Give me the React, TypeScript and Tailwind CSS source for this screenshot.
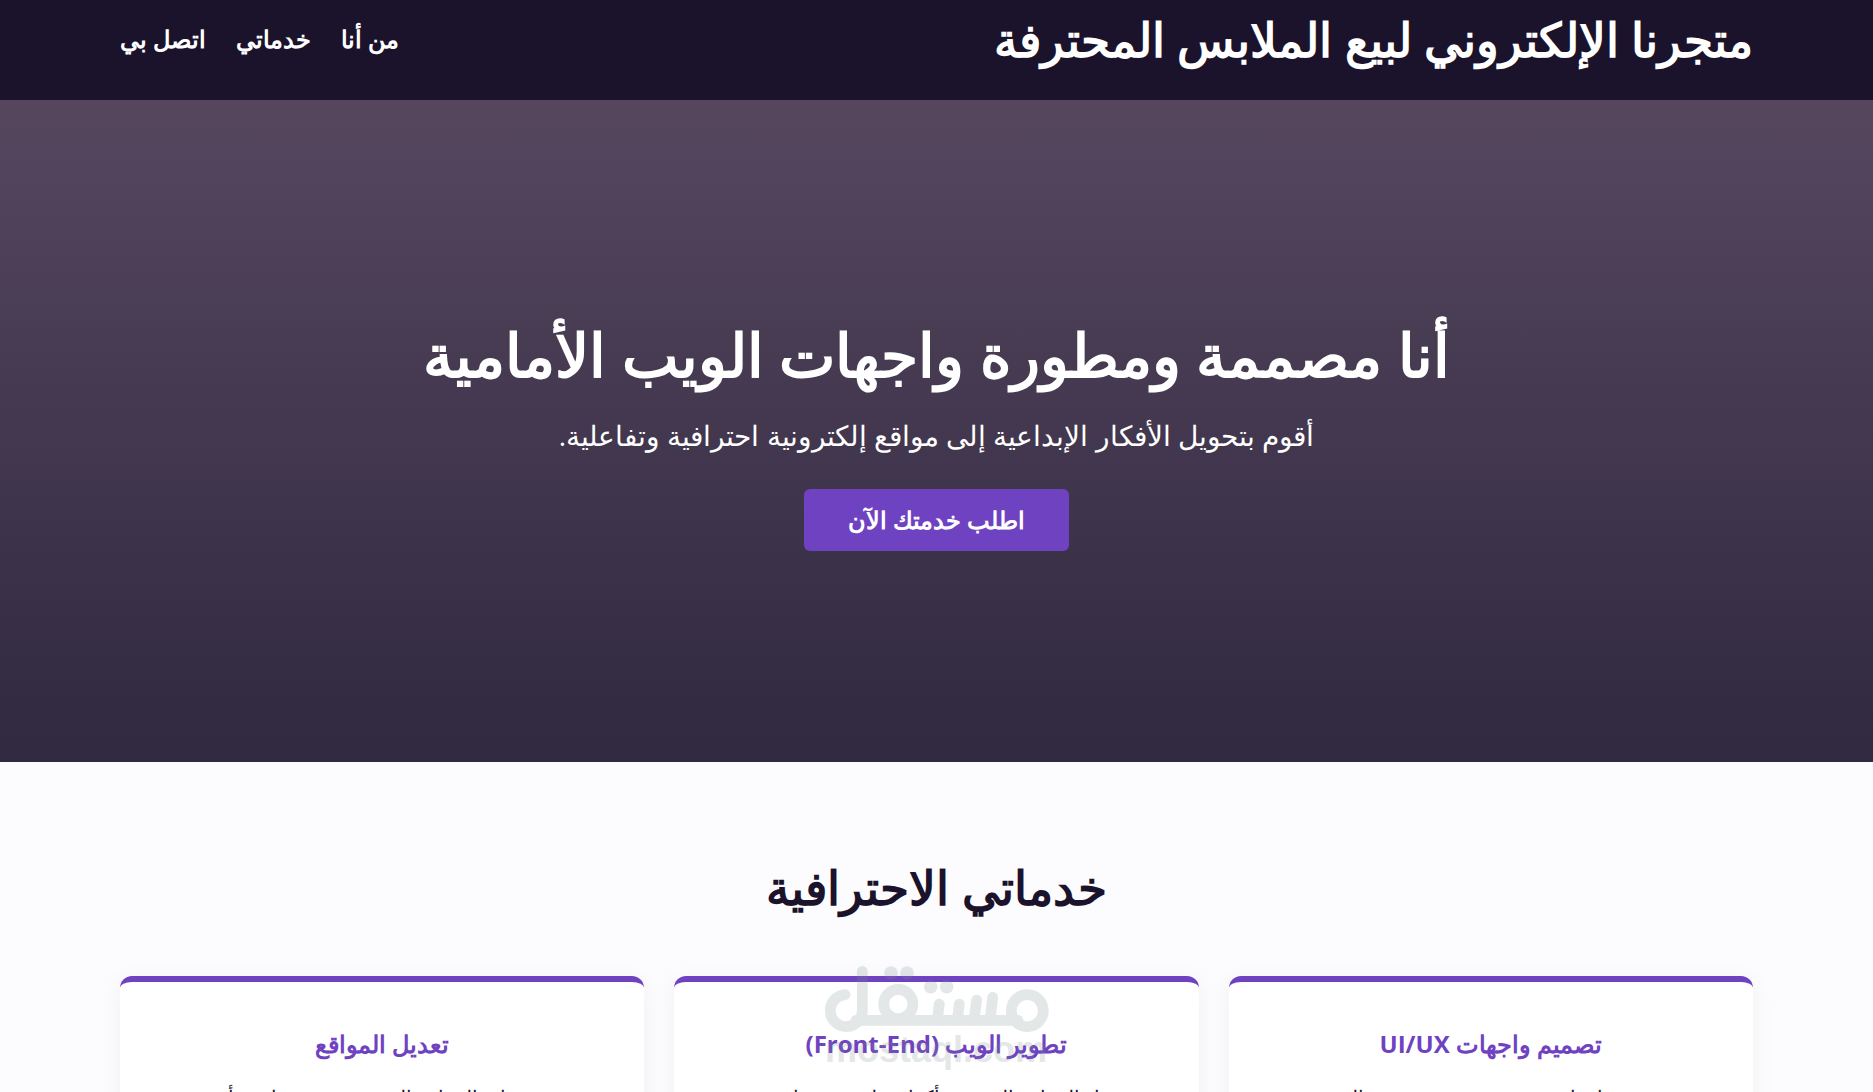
const links = [
    { label: "من أنا", href: "#about" },
    { label: "خدماتي", href: "#services" },
    { label: "اتصل بي", href: "#contact" },
];

const services = [
    {
        title: "تصميم واجهات UI/UX",
        description: "تصميم ورسم واجهات عصرية ومميزة تجذب المستخدمين.",
    },
    {
        title: "تطوير الويب (Front-End)",
        description: "بناء المواقع المميزة بأكواد نظيفة ومتجاوبة.",
    },
    {
        title: "تعديل المواقع",
        description: "تحديث وصيانة المواقع القديمة وتحسينها من أي عيب.",
    },
];

function Watermark() {
    return (
        <svg
            viewBox="0 0 234 112"
            className="pointer-events-none absolute left-1/2 -top-3 h-[112px] w-[234px] -translate-x-1/2 text-[#768c8c] opacity-20"
            direction="ltr"
        >
            <g fill="none" stroke="currentColor" strokeWidth="10.7" strokeLinecap="round">
                <circle cx="207.3" cy="46.7" r="16" />
                <circle cx="78.3" cy="40" r="14.6" />
                <path d="M25 30.7A16 16 0 1 0 42.3 46.7V7.3" />
                <path d="M36 56.3H198" />
                <path d="M119.3 40L117.3 56M139.3 40L137.3 56M156.7 36L154 56M172.7 33.3L170 56" />
            </g>
            <g fill="currentColor">
                <circle cx="71" cy="9" r="6.8" />
                <circle cx="87" cy="9" r="6.8" />
                <circle cx="110.7" cy="22.7" r="6.8" />
                <circle cx="126.7" cy="22.7" r="6.8" />
                <text x="116" y="98" textAnchor="middle" className="font-['Liberation_Sans',sans-serif] text-4xl font-bold">
                    mostaql.com
                </text>
            </g>
        </svg>
    );
}

export default function App() {
    return (
        <div dir="rtl" className="min-h-screen bg-[#fcfcff] font-['Open_Sans',sans-serif] text-[#1b132b]">
            <header className="bg-[#1b132b] text-white">
                <div className="flex h-[100px] items-start justify-between px-[120px] pt-1">
                    <h1 className="text-[47px] leading-[70px] font-semibold">متجرنا الإلكتروني لبيع الملابس المحترفة</h1>
                    <nav className="flex gap-[30px] pt-[15px]">
                        {links.map((link) => (
                            <a key={link.href} href={link.href} className="text-2xl leading-10 font-semibold">
                                {link.label}
                            </a>
                        ))}
                    </nav>
                </div>
            </header>

            <section
                id="about"
                className="flex h-[662px] flex-col items-center justify-center bg-linear-to-b from-[#56475f] to-[#30293f] text-center text-white"
            >
                <h2 className="mb-4 text-[60px] leading-[86px] font-semibold">أنا مصممة ومطورة واجهات الويب الأمامية</h2>
                <p className="mb-8 text-[28px] leading-[44px]">
                    أقوم بتحويل الأفكار الإبداعية إلى مواقع إلكترونية احترافية وتفاعلية.
                </p>
                <button type="button" className="h-[62px] rounded-md bg-[#6f42c1] px-11 text-2xl font-semibold">
                    اطلب خدمتك الآن
                </button>
            </section>

            <section id="services" className="px-[120px] py-[90px]">
                <h2 className="mb-[54px] text-center text-[47px] leading-[70px] font-semibold">خدماتي الاحترافية</h2>
                <div className="relative grid grid-cols-3 gap-[30px]">
                    {services.map((service) => (
                        <article
                            key={service.title}
                            className="rounded-xl border-t-6 border-[#6f42c1] bg-white px-5 pt-10 pb-12 text-center shadow-[0_5px_25px_rgba(27,19,43,0.05)]"
                        >
                            <h3 className="mb-4 text-2xl leading-[44px] font-bold text-[#6f42c1]">{service.title}</h3>
                            <p className="text-xl leading-8">{service.description}</p>
                        </article>
                    ))}
                    <Watermark />
                </div>
            </section>
        </div>
    );
}
